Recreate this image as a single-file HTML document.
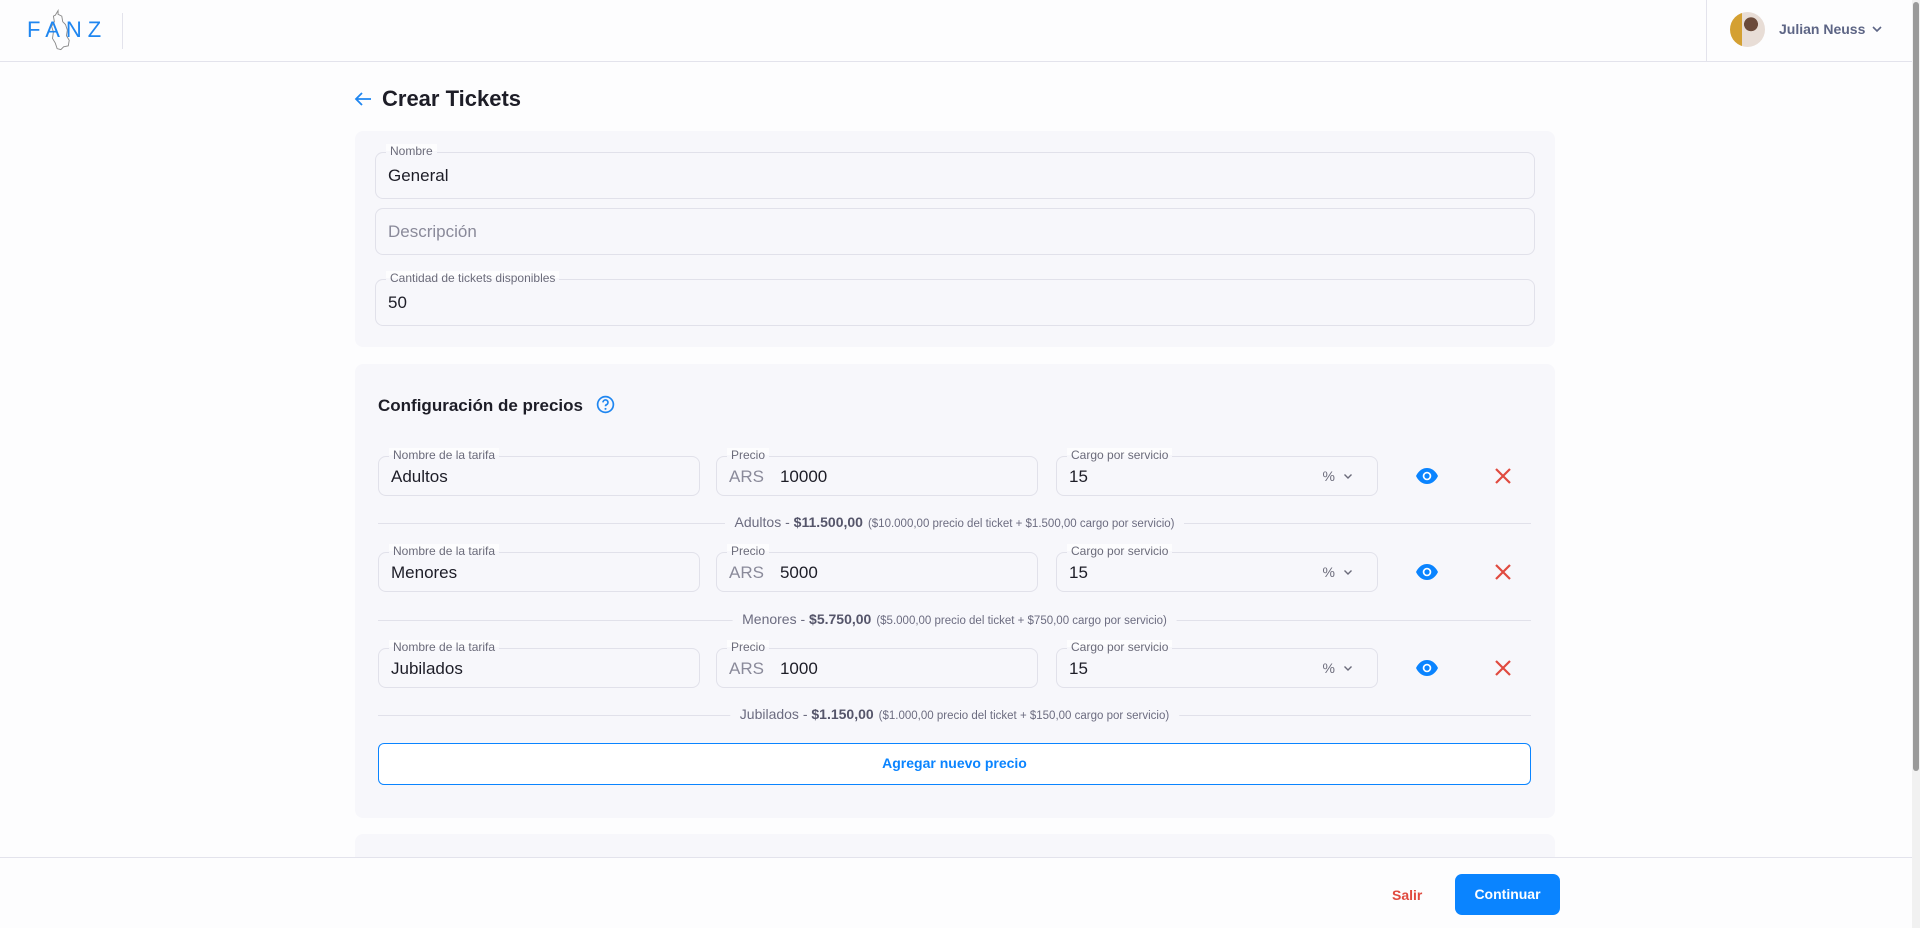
<!DOCTYPE html>
<html><head><meta charset="utf-8"><style>
*{box-sizing:border-box;margin:0;padding:0}
body{width:1920px;height:928px;overflow:hidden;background:#fdfdfe;font-family:"Liberation Sans",sans-serif;color:#1d1d27;position:relative}
.a{position:absolute}
.card{position:absolute;background:#f7f7fb;border-radius:8px}
.f{position:absolute;border:1px solid #e1e1ea;border-radius:8px;background:#f7f7fb}
.lbl{position:absolute;top:-9px;left:10px;padding:0 4px;font-size:12px;color:#6b6b7a;background:linear-gradient(#fdfdfe 50%,#f7f7fb 50%)}
.val{position:absolute;left:12px;font-size:17px;color:#1d1d27}
.sum{position:absolute;left:378px;width:1153px;height:1px;background:#e1e1ea}
.sum span{position:absolute;left:50%;transform:translateX(-50%);top:-9px;background:#f7f7fb;padding:0 10px;white-space:nowrap;font-size:14px;color:#6c6c80}
.sum b{color:#55556a}
.sum small{font-size:11.5px;margin-left:5px}
</style></head><body>
<!-- header -->
<div class="a" style="left:0;top:0;width:1912px;height:62px;border-bottom:1px solid #e3e3ec;background:#fdfdfe"></div>
<svg class="a" style="left:46px;top:8px" width="26" height="46" viewBox="0 0 28 48"><path d="M13 2 l-3 5 -2 1 1 6 -3 5 2 6 -1 7 3 5 2 6 4 1 3-3 5-1 1-6 -3-5 1-6 -2-6 -3-3 -1-6 -4-2z" fill="none" stroke="#8a8a8a" stroke-width="1"/></svg>
<div class="a" style="left:27px;top:17px;font-size:22px;letter-spacing:6px;color:#1f86f0;font-weight:300">FANZ</div>
<div class="a" style="left:122px;top:13px;width:1px;height:36px;background:#e3e3ec"></div>
<div class="a" style="left:1706px;top:0;width:1px;height:62px;background:#e3e3ec"></div>
<div class="a" style="left:1730px;top:12px;width:35px;height:35px;border-radius:50%;background:radial-gradient(circle at 60% 35%,#6b4a3a 0 22%,transparent 23%),linear-gradient(90deg,#d4a032 0 35%,#e8ddd6 35% 100%)"></div>
<div class="a" style="left:1779px;top:21px;font-size:14px;font-weight:bold;color:#5d6585">Julian Neuss</div>
<svg class="a" style="left:1871px;top:25px" width="12" height="8" viewBox="0 0 12 8"><path d="M2 2l4 4 4-4" fill="none" stroke="#5d6585" stroke-width="1.6"/></svg>
<div class="a" style="left:1912px;top:0;width:8px;height:928px;background:#f1f1f1"></div>
<div class="a" style="left:1913px;top:2px;width:6px;height:769px;background:#9a9a9a;border-radius:3px"></div>

<!-- title -->
<svg class="a" style="left:354px;top:91px" width="18" height="16" viewBox="0 0 18 16"><path d="M17 8H2M8 2L2 8l6 6" fill="none" stroke="#1f86f0" stroke-width="1.8"/></svg>
<div class="a" style="left:382px;top:86px;font-size:22px;font-weight:bold;color:#1d1d27">Crear Tickets</div>

<!-- card 1 -->
<div class="card" style="left:355px;top:131px;width:1200px;height:216px"></div>
<div class="f" style="left:375px;top:152px;width:1160px;height:47px"><div class="lbl">Nombre</div><div class="val" style="top:13px">General</div></div>
<div class="f" style="left:375px;top:208px;width:1160px;height:47px"><div class="val" style="top:13px;color:#8a8a9a">Descripción</div></div>
<div class="f" style="left:375px;top:279px;width:1160px;height:47px"><div class="lbl">Cantidad de tickets disponibles</div><div class="val" style="top:13px">50</div></div>

<!-- card 2 -->
<div class="card" style="left:355px;top:364px;width:1200px;height:454px"></div>
<div class="a" style="left:378px;top:396px;font-size:17px;font-weight:bold;color:#1d1d27">Configuración de precios</div>
<svg class="a" style="left:596px;top:395px" width="19" height="19" viewBox="0 0 20 20"><circle cx="10" cy="10" r="8.3" fill="none" stroke="#1f86f0" stroke-width="1.8"/><path d="M7.4 7.8a2.6 2.6 0 1 1 3.6 2.4c-.8.4-1 .9-1 1.7" fill="none" stroke="#1f86f0" stroke-width="1.8"/><circle cx="10" cy="14.6" r="1.1" fill="#1f86f0"/></svg>

<!-- row1 -->
<div class="f" style="left:378px;top:456px;width:322px;height:40px"><div class="lbl">Nombre de la tarifa</div><div class="val" style="top:10px">Adultos</div></div>
<div class="f" style="left:716px;top:456px;width:322px;height:40px"><div class="lbl">Precio</div><div class="val" style="top:10px"><span style="color:#8a8a9a;margin-right:16px">ARS</span>10000</div></div>
<div class="f" style="left:1056px;top:456px;width:322px;height:40px"><div class="lbl">Cargo por servicio</div><div class="val" style="top:10px">15</div><div class="a" style="right:42px;top:11px;font-size:14px;color:#6b6b7a">%</div><svg class="a" style="right:24px;top:16px" width="10" height="7" viewBox="0 0 10 7"><path d="M1.5 1.5l3.5 3.5 3.5-3.5" fill="none" stroke="#6b6b7a" stroke-width="1.4"/></svg></div>
<svg class="a" style="left:1415px;top:467px" width="24" height="18" viewBox="0 0 24 18"><path d="M1 9C4 3 8 1 12 1s8 2 11 8c-3 6-7 8-11 8S4 15 1 9z" fill="#0a84ff"/><circle cx="12" cy="9" r="4.3" fill="#fff"/><circle cx="12" cy="9" r="2.6" fill="#0a84ff"/></svg>
<svg class="a" style="left:1494px;top:467px" width="18" height="18" viewBox="0 0 18 18"><path d="M2 2l14 14M16 2L2 16" stroke="#e04a3f" stroke-width="2.2"/></svg>
<div class="sum" style="top:523px"><span>Adultos - <b>$11.500,00</b><small>($10.000,00 precio del ticket + $1.500,00 cargo por servicio)</small></span></div>
<!-- row2 -->
<div class="f" style="left:378px;top:552px;width:322px;height:40px"><div class="lbl">Nombre de la tarifa</div><div class="val" style="top:10px">Menores</div></div>
<div class="f" style="left:716px;top:552px;width:322px;height:40px"><div class="lbl">Precio</div><div class="val" style="top:10px"><span style="color:#8a8a9a;margin-right:16px">ARS</span>5000</div></div>
<div class="f" style="left:1056px;top:552px;width:322px;height:40px"><div class="lbl">Cargo por servicio</div><div class="val" style="top:10px">15</div><div class="a" style="right:42px;top:11px;font-size:14px;color:#6b6b7a">%</div><svg class="a" style="right:24px;top:16px" width="10" height="7" viewBox="0 0 10 7"><path d="M1.5 1.5l3.5 3.5 3.5-3.5" fill="none" stroke="#6b6b7a" stroke-width="1.4"/></svg></div>
<svg class="a" style="left:1415px;top:563px" width="24" height="18" viewBox="0 0 24 18"><path d="M1 9C4 3 8 1 12 1s8 2 11 8c-3 6-7 8-11 8S4 15 1 9z" fill="#0a84ff"/><circle cx="12" cy="9" r="4.3" fill="#fff"/><circle cx="12" cy="9" r="2.6" fill="#0a84ff"/></svg>
<svg class="a" style="left:1494px;top:563px" width="18" height="18" viewBox="0 0 18 18"><path d="M2 2l14 14M16 2L2 16" stroke="#e04a3f" stroke-width="2.2"/></svg>
<div class="sum" style="top:620px"><span>Menores - <b>$5.750,00</b><small>($5.000,00 precio del ticket + $750,00 cargo por servicio)</small></span></div>
<!-- row3 -->
<div class="f" style="left:378px;top:648px;width:322px;height:40px"><div class="lbl">Nombre de la tarifa</div><div class="val" style="top:10px">Jubilados</div></div>
<div class="f" style="left:716px;top:648px;width:322px;height:40px"><div class="lbl">Precio</div><div class="val" style="top:10px"><span style="color:#8a8a9a;margin-right:16px">ARS</span>1000</div></div>
<div class="f" style="left:1056px;top:648px;width:322px;height:40px"><div class="lbl">Cargo por servicio</div><div class="val" style="top:10px">15</div><div class="a" style="right:42px;top:11px;font-size:14px;color:#6b6b7a">%</div><svg class="a" style="right:24px;top:16px" width="10" height="7" viewBox="0 0 10 7"><path d="M1.5 1.5l3.5 3.5 3.5-3.5" fill="none" stroke="#6b6b7a" stroke-width="1.4"/></svg></div>
<svg class="a" style="left:1415px;top:659px" width="24" height="18" viewBox="0 0 24 18"><path d="M1 9C4 3 8 1 12 1s8 2 11 8c-3 6-7 8-11 8S4 15 1 9z" fill="#0a84ff"/><circle cx="12" cy="9" r="4.3" fill="#fff"/><circle cx="12" cy="9" r="2.6" fill="#0a84ff"/></svg>
<svg class="a" style="left:1494px;top:659px" width="18" height="18" viewBox="0 0 18 18"><path d="M2 2l14 14M16 2L2 16" stroke="#e04a3f" stroke-width="2.2"/></svg>
<div class="sum" style="top:715px"><span>Jubilados - <b>$1.150,00</b><small>($1.000,00 precio del ticket + $150,00 cargo por servicio)</small></span></div>

<div class="a" style="left:378px;top:743px;width:1153px;height:42px;border:1.5px solid #0a84ff;border-radius:6px;background:#fff;text-align:center;line-height:39px;font-size:14px;font-weight:bold;color:#0a84ff">Agregar nuevo precio</div>

<!-- card 3 -->
<div class="card" style="left:355px;top:834px;width:1200px;height:60px"></div>

<!-- footer -->
<div class="a" style="left:0;top:857px;width:1912px;height:71px;background:#fdfdfe;border-top:1px solid #e3e3ec"></div>
<div class="a" style="left:1392px;top:887px;font-size:14px;font-weight:bold;color:#e04a3f">Salir</div>
<div class="a" style="left:1455px;top:874px;width:105px;height:41px;background:#0a84ff;border-radius:7px;color:#fff;font-size:14px;font-weight:bold;text-align:center;line-height:41px">Continuar</div>
</body></html>
